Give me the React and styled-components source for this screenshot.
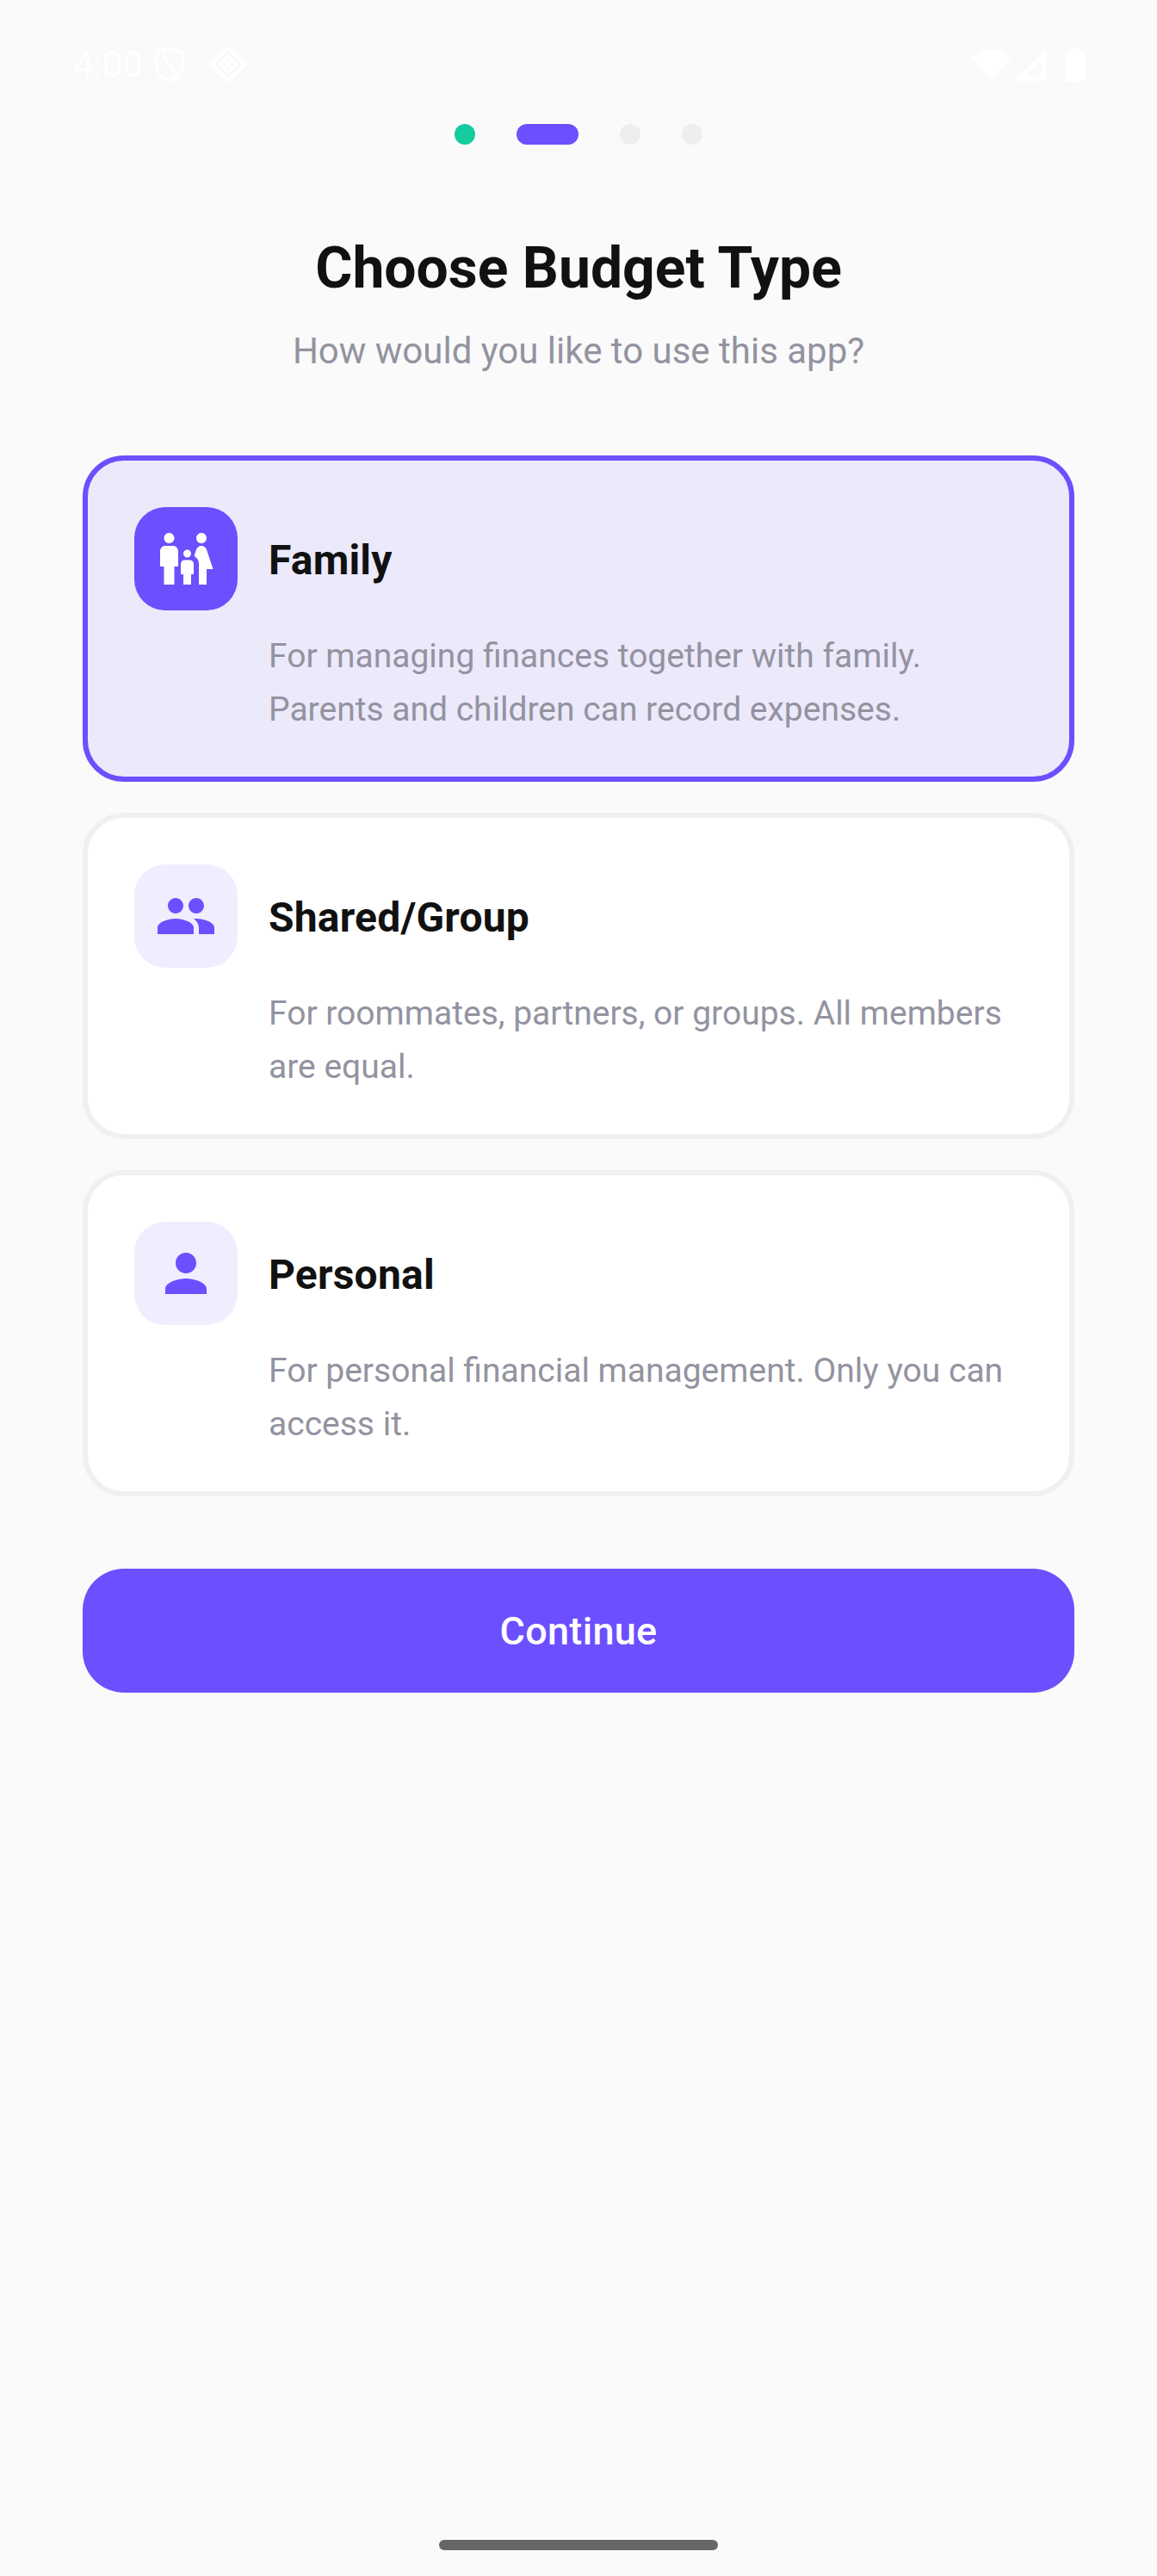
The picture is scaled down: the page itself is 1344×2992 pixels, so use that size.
import React from "react";
import styled, { createGlobalStyle } from "styled-components";

const Global = createGlobalStyle`
  html, body { margin: 0; padding: 0; background: #fafafa; }
  * { box-sizing: border-box; }
`;

const Page = styled.div`
  width: 1344px;
  height: 2992px;
  background: #fafafa;
  font-family: Roboto, "Noto Sans", sans-serif;
  display: flex;
  flex-direction: column;
  overflow: hidden;
`;

const StatusBar = styled.div`
  height: 44px;
  margin-top: 53px;
  padding: 0 84px 0 85px;
  display: flex;
  align-items: center;
  justify-content: space-between;
  color: #ffffff;
`;

const StatusGroup = styled.div`
  display: flex;
  align-items: center;
  gap: ${(p) => p.$gap}px;
`;

const Clock = styled.span`
  font-size: 42px;
  line-height: 44px;
`;

const Spacer = styled.span`
  width: ${(p) => p.$w}px;
`;

const Stepper = styled.div`
  margin-top: 47px;
  display: flex;
  justify-content: center;
  gap: 48px;
`;

const Step = styled.div`
  height: 24px;
  width: ${(p) => (p.$active ? 72 : 24)}px;
  border-radius: 12px;
  background: ${(p) => (p.$active ? "#6c4fff" : p.$done ? "#14cc9e" : "#eeeeef")};
`;

const Title = styled.h1`
  margin: 102px 0 0;
  text-align: center;
  font-size: 66px;
  line-height: 84px;
  font-weight: 700;
  color: #111111;
`;

const Subtitle = styled.p`
  margin: 24px 0 0;
  text-align: center;
  font-size: 42px;
  line-height: 60px;
  color: #9393a0;
`;

const Cards = styled.div`
  margin: 91px 96px 0;
  display: flex;
  flex-direction: column;
  gap: 36px;
`;

const Card = styled.div`
  border: 6px solid ${(p) => (p.$selected ? "#6c4fff" : "#eff0f1")};
  background: ${(p) => (p.$selected ? "#ece9fb" : "#ffffff")};
  border-radius: 48px;
  padding: 54px 54px 47px;
`;

const CardHead = styled.div`
  display: flex;
  align-items: center;
  gap: 36px;
`;

const IconBox = styled.div`
  width: 120px;
  height: 120px;
  border-radius: 36px;
  display: flex;
  align-items: center;
  justify-content: center;
  background: ${(p) => (p.$selected ? "#6c4fff" : "#f0edff")};
  color: ${(p) => (p.$selected ? "#ffffff" : "#6c4fff")};
`;

const CardTitle = styled.h2`
  margin: 3px 0 0;
  font-size: 48px;
  line-height: 60px;
  font-weight: 700;
  letter-spacing: 0.2px;
  color: #111111;
`;

const CardDesc = styled.p`
  margin: 22px 0 0 156px;
  font-size: 39px;
  line-height: 62px;
  color: #9393a0;
`;

const ContinueButton = styled.button`
  margin: 84px 96px 0;
  height: 144px;
  border: none;
  border-radius: 48px;
  background: #6c4fff;
  color: #ffffff;
  font-family: inherit;
  font-size: 45px;
  font-weight: 500;
  letter-spacing: 0.3px;
`;

const HomeIndicator = styled.div`
  margin: auto auto 30px;
  width: 324px;
  height: 12px;
  border-radius: 6px;
  background: #666666;
`;

const paths = {
  family:
    "M16 4c0-1.11.89-2 2-2s2 .89 2 2-.89 2-2 2-2-.89-2-2zm4 18v-6h2.5l-2.54-7.63C19.68 7.55 18.92 7 18.06 7h-.12c-.86 0-1.63.55-1.9 1.37l-.86 2.58c1.08.6 1.82 1.73 1.82 3.05v8h5zm-7.5-10.5c.83 0 1.5-.67 1.5-1.5s-.67-1.5-1.5-1.5S11 9.17 11 10s.67 1.5 1.5 1.5zM5.5 6c1.11 0 2-.89 2-2s-.89-2-2-2-2 .89-2 2 .89 2 2 2zm2 16v-7H9V9c0-1.1-.9-2-2-2H4c-1.1 0-2 .9-2 2v6h1.5v7h4zm6.5 0v-4h1v-4c0-.82-.68-1.5-1.5-1.5h-2c-.82 0-1.5.68-1.5 1.5v4h1v4h3z",
  people:
    "M16 11c1.66 0 2.99-1.34 2.99-3S17.66 5 16 5c-1.66 0-3 1.34-3 3s1.34 3 3 3zm-8 0c1.66 0 2.99-1.34 2.99-3S9.66 5 8 5C6.34 5 5 6.34 5 8s1.34 3 3 3zm0 2c-2.33 0-7 1.17-7 3.5V19h14v-2.5c0-2.33-4.67-3.5-7-3.5zm8 0c-.29 0-.62.02-.97.05 1.16.84 1.97 1.97 1.97 3.45V19h6v-2.5c0-2.33-4.67-3.5-7-3.5z",
  person:
    "M12 12c2.21 0 4-1.79 4-4s-1.79-4-4-4-4 1.79-4 4 1.79 4 4 4zm0 2c-2.67 0-8 1.34-8 4v2h16v-2c0-2.66-5.33-4-8-4z",
};

const Glyph = ({ name }) => (
  <svg width="72" height="72" viewBox="0 0 24 24" fill="currentColor">
    <path d={paths[name]} />
  </svg>
);

const ShieldIcon = () => (
  <svg width="34" height="42" viewBox="0 0 34 42" fill="none" stroke="currentColor" strokeWidth="3">
    <path d="M17 2 L32 7 V22 C32 31 25 37 17 40 C9 37 2 31 2 22 V7 Z" strokeLinejoin="round" />
    <path d="M13 4 C9 12 13 17 19 23 C24 28 25 34 20 38" />
  </svg>
);

const DiamondIcon = () => (
  <svg width="42" height="42" viewBox="0 0 42 42" fill="none" stroke="currentColor">
    <path d="M21 2 L40 21 L21 40 L2 21 Z" strokeWidth="3.5" strokeLinejoin="round" />
    <path d="M21 11 L31 21 L21 31 L11 21 Z M16 16 L26 26 M26 16 L16 26" strokeWidth="2.5" />
  </svg>
);

const WifiIcon = () => (
  <svg width="45" height="37" viewBox="0 0 45 37" fill="currentColor">
    <path d="M22.5 37 L0 10 C6 4 14 0 22.5 0 C31 0 39 4 45 10 Z" />
  </svg>
);

const SignalIcon = () => (
  <svg width="37" height="37" viewBox="0 0 37 37" fill="currentColor">
    <path fillRule="evenodd" d="M37 0 V37 H0 Z M32 12 L12 32 H32 Z" />
  </svg>
);

const BatteryIcon = () => (
  <svg width="23" height="39" viewBox="0 0 23 39" fill="currentColor">
    <path d="M7 0 H16 V4 H20 A3 3 0 0 1 23 7 V36 A3 3 0 0 1 20 39 H3 A3 3 0 0 1 0 36 V7 A3 3 0 0 1 3 4 H7 Z" />
  </svg>
);

const options = [
  {
    icon: "family",
    title: "Family",
    desc: "For managing finances together with family. Parents and children can record expenses.",
    selected: true,
  },
  {
    icon: "people",
    title: "Shared/Group",
    desc: "For roommates, partners, or groups. All members are equal.",
  },
  {
    icon: "person",
    title: "Personal",
    desc: "For personal financial management. Only you can access it.",
  },
];

export default function App() {
  return (
    <Page>
      <Global />
      <StatusBar>
        <StatusGroup $gap={0}>
          <Clock>4:00</Clock>
          <Spacer $w={14} />
          <ShieldIcon />
          <Spacer $w={30} />
          <DiamondIcon />
        </StatusGroup>
        <StatusGroup $gap={4}>
          <WifiIcon />
          <SignalIcon />
          <Spacer $w={14} />
          <BatteryIcon />
        </StatusGroup>
      </StatusBar>
      <Stepper>
        <Step $done />
        <Step $active />
        <Step />
        <Step />
      </Stepper>
      <Title>Choose Budget Type</Title>
      <Subtitle>How would you like to use this app?</Subtitle>
      <Cards>
        {options.map((o) => (
          <Card key={o.title} $selected={o.selected}>
            <CardHead>
              <IconBox $selected={o.selected}>
                <Glyph name={o.icon} />
              </IconBox>
              <CardTitle>{o.title}</CardTitle>
            </CardHead>
            <CardDesc>{o.desc}</CardDesc>
          </Card>
        ))}
      </Cards>
      <ContinueButton>Continue</ContinueButton>
      <HomeIndicator />
    </Page>
  );
}
